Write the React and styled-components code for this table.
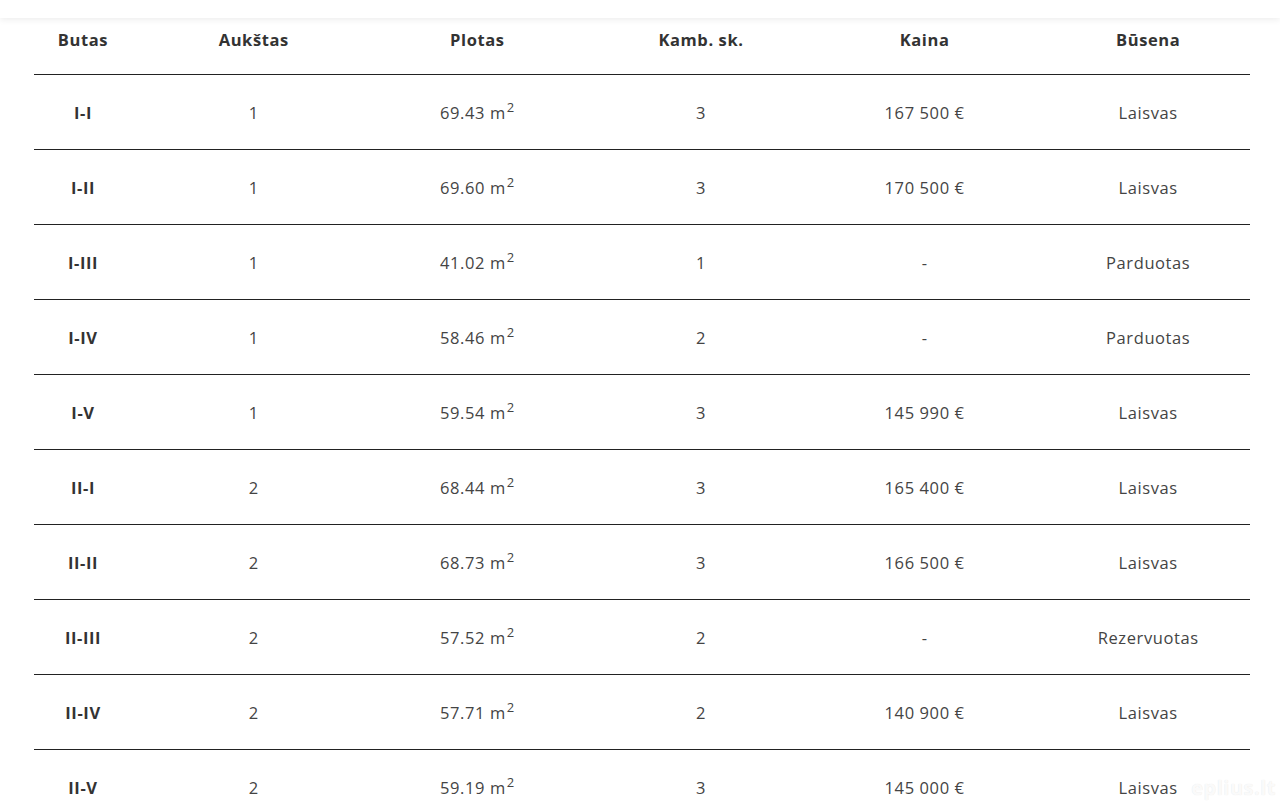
import React from "react";
import styled, { createGlobalStyle } from "styled-components";

const GlobalStyle = createGlobalStyle`
  body {
    margin: 0;
    background: #fff;
    font-family: "Open Sans", "Liberation Sans", sans-serif;
  }
`;

const rows = [
  { apt: "I-I", floor: 1, area: "69.43", rooms: 3, price: "167 500 €", status: "Laisvas" },
  { apt: "I-II", floor: 1, area: "69.60", rooms: 3, price: "170 500 €", status: "Laisvas" },
  { apt: "I-III", floor: 1, area: "41.02", rooms: 1, price: "-", status: "Parduotas" },
  { apt: "I-IV", floor: 1, area: "58.46", rooms: 2, price: "-", status: "Parduotas" },
  { apt: "I-V", floor: 1, area: "59.54", rooms: 3, price: "145 990 €", status: "Laisvas" },
  { apt: "II-I", floor: 2, area: "68.44", rooms: 3, price: "165 400 €", status: "Laisvas" },
  { apt: "II-II", floor: 2, area: "68.73", rooms: 3, price: "166 500 €", status: "Laisvas" },
  { apt: "II-III", floor: 2, area: "57.52", rooms: 2, price: "-", status: "Rezervuotas" },
  { apt: "II-IV", floor: 2, area: "57.71", rooms: 2, price: "140 900 €", status: "Laisvas" },
  { apt: "II-V", floor: 2, area: "59.19", rooms: 3, price: "145 000 €", status: "Laisvas" },
];

export default function App() {
  return (
    <Page>
      <GlobalStyle />
      <TopBar />
      <Table>
        <HeadRow>
          <HeadCell $first>Butas</HeadCell>
          <HeadCell>Aukštas</HeadCell>
          <HeadCell>Plotas</HeadCell>
          <HeadCell>Kamb. sk.</HeadCell>
          <HeadCell>Kaina</HeadCell>
          <HeadCell>Būsena</HeadCell>
        </HeadRow>
        {rows.map((r) => (
          <Row key={r.apt}>
            <AptCell>{r.apt}</AptCell>
            <Cell>{r.floor}</Cell>
            <Cell>
              <span>
                {r.area} m<Sup>2</Sup>
              </span>
            </Cell>
            <Cell>{r.rooms}</Cell>
            <Cell>{r.price}</Cell>
            <Cell>{r.status}</Cell>
          </Row>
        ))}
      </Table>
      <Watermark>eplius.lt</Watermark>
    </Page>
  );
}

const Page = styled.div`
  position: relative;
  height: 807px;
  overflow: hidden;
  background: #fff;
`;

const TopBar = styled.div`
  height: 18px;
  background: #fff;
  box-shadow: 0 2px 6px rgba(0, 0, 0, 0.07);
  position: relative;
  z-index: 2;
`;

const Table = styled.div`
  width: 1216px;
  margin-left: 34px;
`;

const HeadRow = styled.div`
  display: grid;
  grid-template-columns: 98px repeat(5, 1fr);
  height: 57px;
  padding-bottom: 13px;
  box-sizing: border-box;
  border-bottom: 1px solid #222;
  align-items: center;
`;

const HeadCell = styled.div`
  text-align: center;
  padding-left: ${(p) => (p.$first ? "0" : "20px")};
  font-size: 16.5px;
  font-weight: 700;
  color: #333;
  letter-spacing: 0.6px;
`;

const Row = styled.div`
  display: grid;
  grid-template-columns: 98px repeat(5, 1fr);
  height: 75px;
  box-sizing: border-box;
  border-bottom: 1px solid #222;
  align-items: center;
`;

const Cell = styled.div`
  text-align: center;
  padding-left: 20px;
  font-size: 16.5px;
  font-weight: 400;
  color: #444;
  letter-spacing: 0.6px;
`;

const AptCell = styled.div`
  text-align: center;
  font-size: 16.5px;
  font-weight: 700;
  color: #333;
  letter-spacing: 0.6px;
`;

const Sup = styled.sup`
  font-size: 13px;
  vertical-align: 0;
  position: relative;
  top: -7px;
  margin-left: 1px;
`;

const Watermark = styled.div`
  position: absolute;
  right: 4px;
  bottom: 6px;
  font-family: "Open Sans", sans-serif;
  font-size: 20px;
  font-weight: 700;
  color: rgba(255, 255, 255, 0.85);
  text-shadow: 0 0 1px rgba(0, 0, 0, 0.12);
  letter-spacing: 0.5px;
`;
